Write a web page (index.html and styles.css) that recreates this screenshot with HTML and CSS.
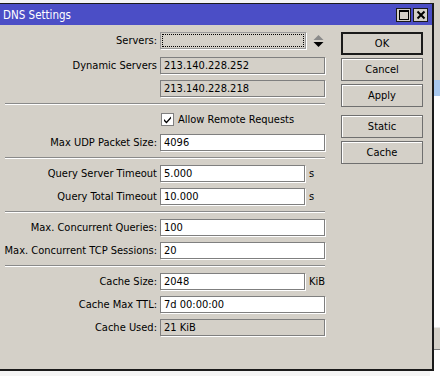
FILE: index.html
```html
<!DOCTYPE html>
<html lang="en">
<head>
  <meta charset="UTF-8">
  <title>DNS Settings</title>
  <link rel="stylesheet" href="styles.css">
</head>
<body>

  <div class="desk">
    <div class="backlist">
      <div class="bl-head"></div>
      <div class="bl-sel"></div>
      <div class="bl-rows"></div>
      <div class="bl-foot"></div>
    </div>

    <div class="window">
      <div class="titlebar">
        <span class="title">DNS Settings</span>
        <div class="tb-btns">
          <span class="tb-btn">
            <svg width="10" height="10" viewBox="0 0 10 10"><rect x="0.5" y="0.5" width="9" height="9" fill="none" stroke="#000"/><line x1="0" y1="1.5" x2="10" y2="1.5" stroke="#000"/></svg>
          </span>
          <span class="tb-btn">
            <svg width="10" height="10" viewBox="0 0 10 10"><path d="M1.5 1.5 L8.5 8.5 M8.5 1.5 L1.5 8.5" stroke="#000" stroke-width="2"/></svg>
          </span>
        </div>
      </div>

      <div class="content">
        <div class="form">
          <div class="row first">
            <label>Servers:</label>
            <div class="field combo"><span class="focus"></span></div>
            <svg class="updown" width="11" height="12" viewBox="0 0 11 12"><path d="M5.5 0 L10.5 5 L0.5 5 Z" fill="#8a8a8a"/><path d="M0.5 7 L10.5 7 L5.5 12 Z" fill="#000"/></svg>
          </div>
          <div class="row">
            <label>Dynamic Servers</label>
            <div class="field ro wide">213.140.228.252</div>
          </div>
          <div class="row">
            <label></label>
            <div class="field ro wide">213.140.228.218</div>
          </div>

          <div class="sep"></div>

          <div class="row">
            <label></label>
            <div class="check">
              <svg width="13" height="13" viewBox="0 0 13 13"><rect x="0.5" y="0.5" width="12" height="12" fill="#fff" stroke="#808080"/><path d="M3 6 L5.5 8.5 L10 3.5 L10 5.5 L5.5 10.5 L3 8 Z" fill="#000"/></svg>
              <span>Allow Remote Requests</span>
            </div>
          </div>
          <div class="row">
            <label>Max UDP Packet Size:</label>
            <div class="field wide">4096</div>
          </div>

          <div class="sep"></div>

          <div class="row">
            <label>Query Server Timeout</label>
            <div class="field short">5.000</div>
            <span class="unit">s</span>
          </div>
          <div class="row">
            <label>Query Total Timeout</label>
            <div class="field short">10.000</div>
            <span class="unit">s</span>
          </div>

          <div class="sep"></div>

          <div class="row">
            <label>Max. Concurrent Queries:</label>
            <div class="field wide">100</div>
          </div>
          <div class="row">
            <label>Max. Concurrent TCP Sessions:</label>
            <div class="field wide">20</div>
          </div>

          <div class="sep"></div>

          <div class="row">
            <label>Cache Size:</label>
            <div class="field short">2048</div>
            <span class="unit">KiB</span>
          </div>
          <div class="row">
            <label>Cache Max TTL:</label>
            <div class="field wide">7d 00:00:00</div>
          </div>
          <div class="row">
            <label>Cache Used:</label>
            <div class="field ro wide">21 KiB</div>
          </div>
        </div>

        <div class="buttons">
          <button class="default">OK</button>
          <button>Cancel</button>
          <button>Apply</button>
          <button class="gap">Static</button>
          <button>Cache</button>
        </div>
      </div>
    </div>
  </div>

</body>
</html>
```

FILE: styles.css
```css
body {
  margin: 0;
  background: #f4f4f4;
  font-family: "DejaVu Sans Condensed", "DejaVu Sans", sans-serif;
  font-size: 11px;
  color: #000;
}

.desk {
  position: relative;
  width: 440px;
  height: 376px;
  overflow: hidden;
  background: #f4f4f4;
}

/* list window visible behind the dialog */
.backlist {
  position: absolute;
  left: 430px;
  top: 0;
  width: 20px;
  height: 376px;
  background: #fff;
}

.bl-head {
  height: 80px;
  background: #d4d0c8;
}

.bl-sel {
  height: 16px;
  background: #a9c9ef;
}

.bl-rows {
  height: 231px;
  background: #fff;
}

.bl-foot {
  height: 21px;
  background: #d4d0c8;
  border-top: 1px solid #e8e8e8;
  border-bottom: 1px solid #808080;
}

.window {
  position: absolute;
  left: -2px;
  top: 3px;
  width: 432px;
  height: 365px;
  background: #d4d0c8;
  border: 2px solid #1a1a1a;
  border-top-width: 1px;
}

.titlebar {
  height: 21px;
  background: #4b4ec6;
  display: flex;
  align-items: center;
  justify-content: space-between;
  padding: 0 4px 0 3px;
}

.title {
  color: #fff;
  font-size: 11.5px;
}

.tb-btns {
  display: flex;
  gap: 2px;
  margin-top: 1px;
}

.tb-btn {
  width: 15px;
  height: 14px;
  background: #d4d0c8;
  border: 1px solid #1a1a1a;
  box-sizing: border-box;
  display: flex;
  align-items: center;
  justify-content: center;
}

.content {
  display: flex;
  padding-top: 7px;
}

.form {
  width: 330px;
  display: flex;
  flex-direction: column;
  gap: 6px;
}

.row {
  display: flex;
  align-items: center;
  height: 17px;
}

.row.first {
  margin-bottom: 2px;
}

.row label {
  width: 157px;
  text-align: right;
  padding-right: 3px;
  flex-shrink: 0;
  white-space: nowrap;
}

.field {
  height: 17px;
  box-sizing: border-box;
  background: #fff;
  border: 1px solid #7f7f7f;
  box-shadow: 1px 1px 0 #fff;
  padding: 0 3px;
  line-height: 15px;
  white-space: nowrap;
}

.field.wide {
  width: 165px;
}

.field.short {
  width: 145px;
}

.field.ro {
  background: #d4d0c8;
}

.field.combo {
  width: 146px;
  background: #d4d0c8;
  border-color: #9a9a9a;
  padding: 1px;
}

.focus {
  display: block;
  height: 13px;
  border: 1px dotted #000;
  box-sizing: border-box;
}

.updown {
  margin-left: 7px;
}

.unit {
  margin-left: 4px;
}

.check {
  display: flex;
  align-items: center;
  gap: 4px;
  padding-left: 1px;
}

.sep {
  margin-left: 5px;
  width: 320px;
  border-top: 1px solid #8a8a8a;
  border-bottom: 1px solid #fff;
}

.buttons {
  margin-left: 11px;
  display: flex;
  flex-direction: column;
  gap: 3px;
}

button {
  width: 82px;
  height: 23px;
  font-family: inherit;
  font-size: 11px;
  background: #d4d0c8;
  color: #000;
  border: 1px solid #6f6f6f;
  box-shadow: inset 1px 1px 0 #fff;
  padding: 0;
}

button.default {
  border: 2px solid #1a1a1a;
  box-shadow: none;
}

button.gap {
  margin-top: 5px;
}
```
